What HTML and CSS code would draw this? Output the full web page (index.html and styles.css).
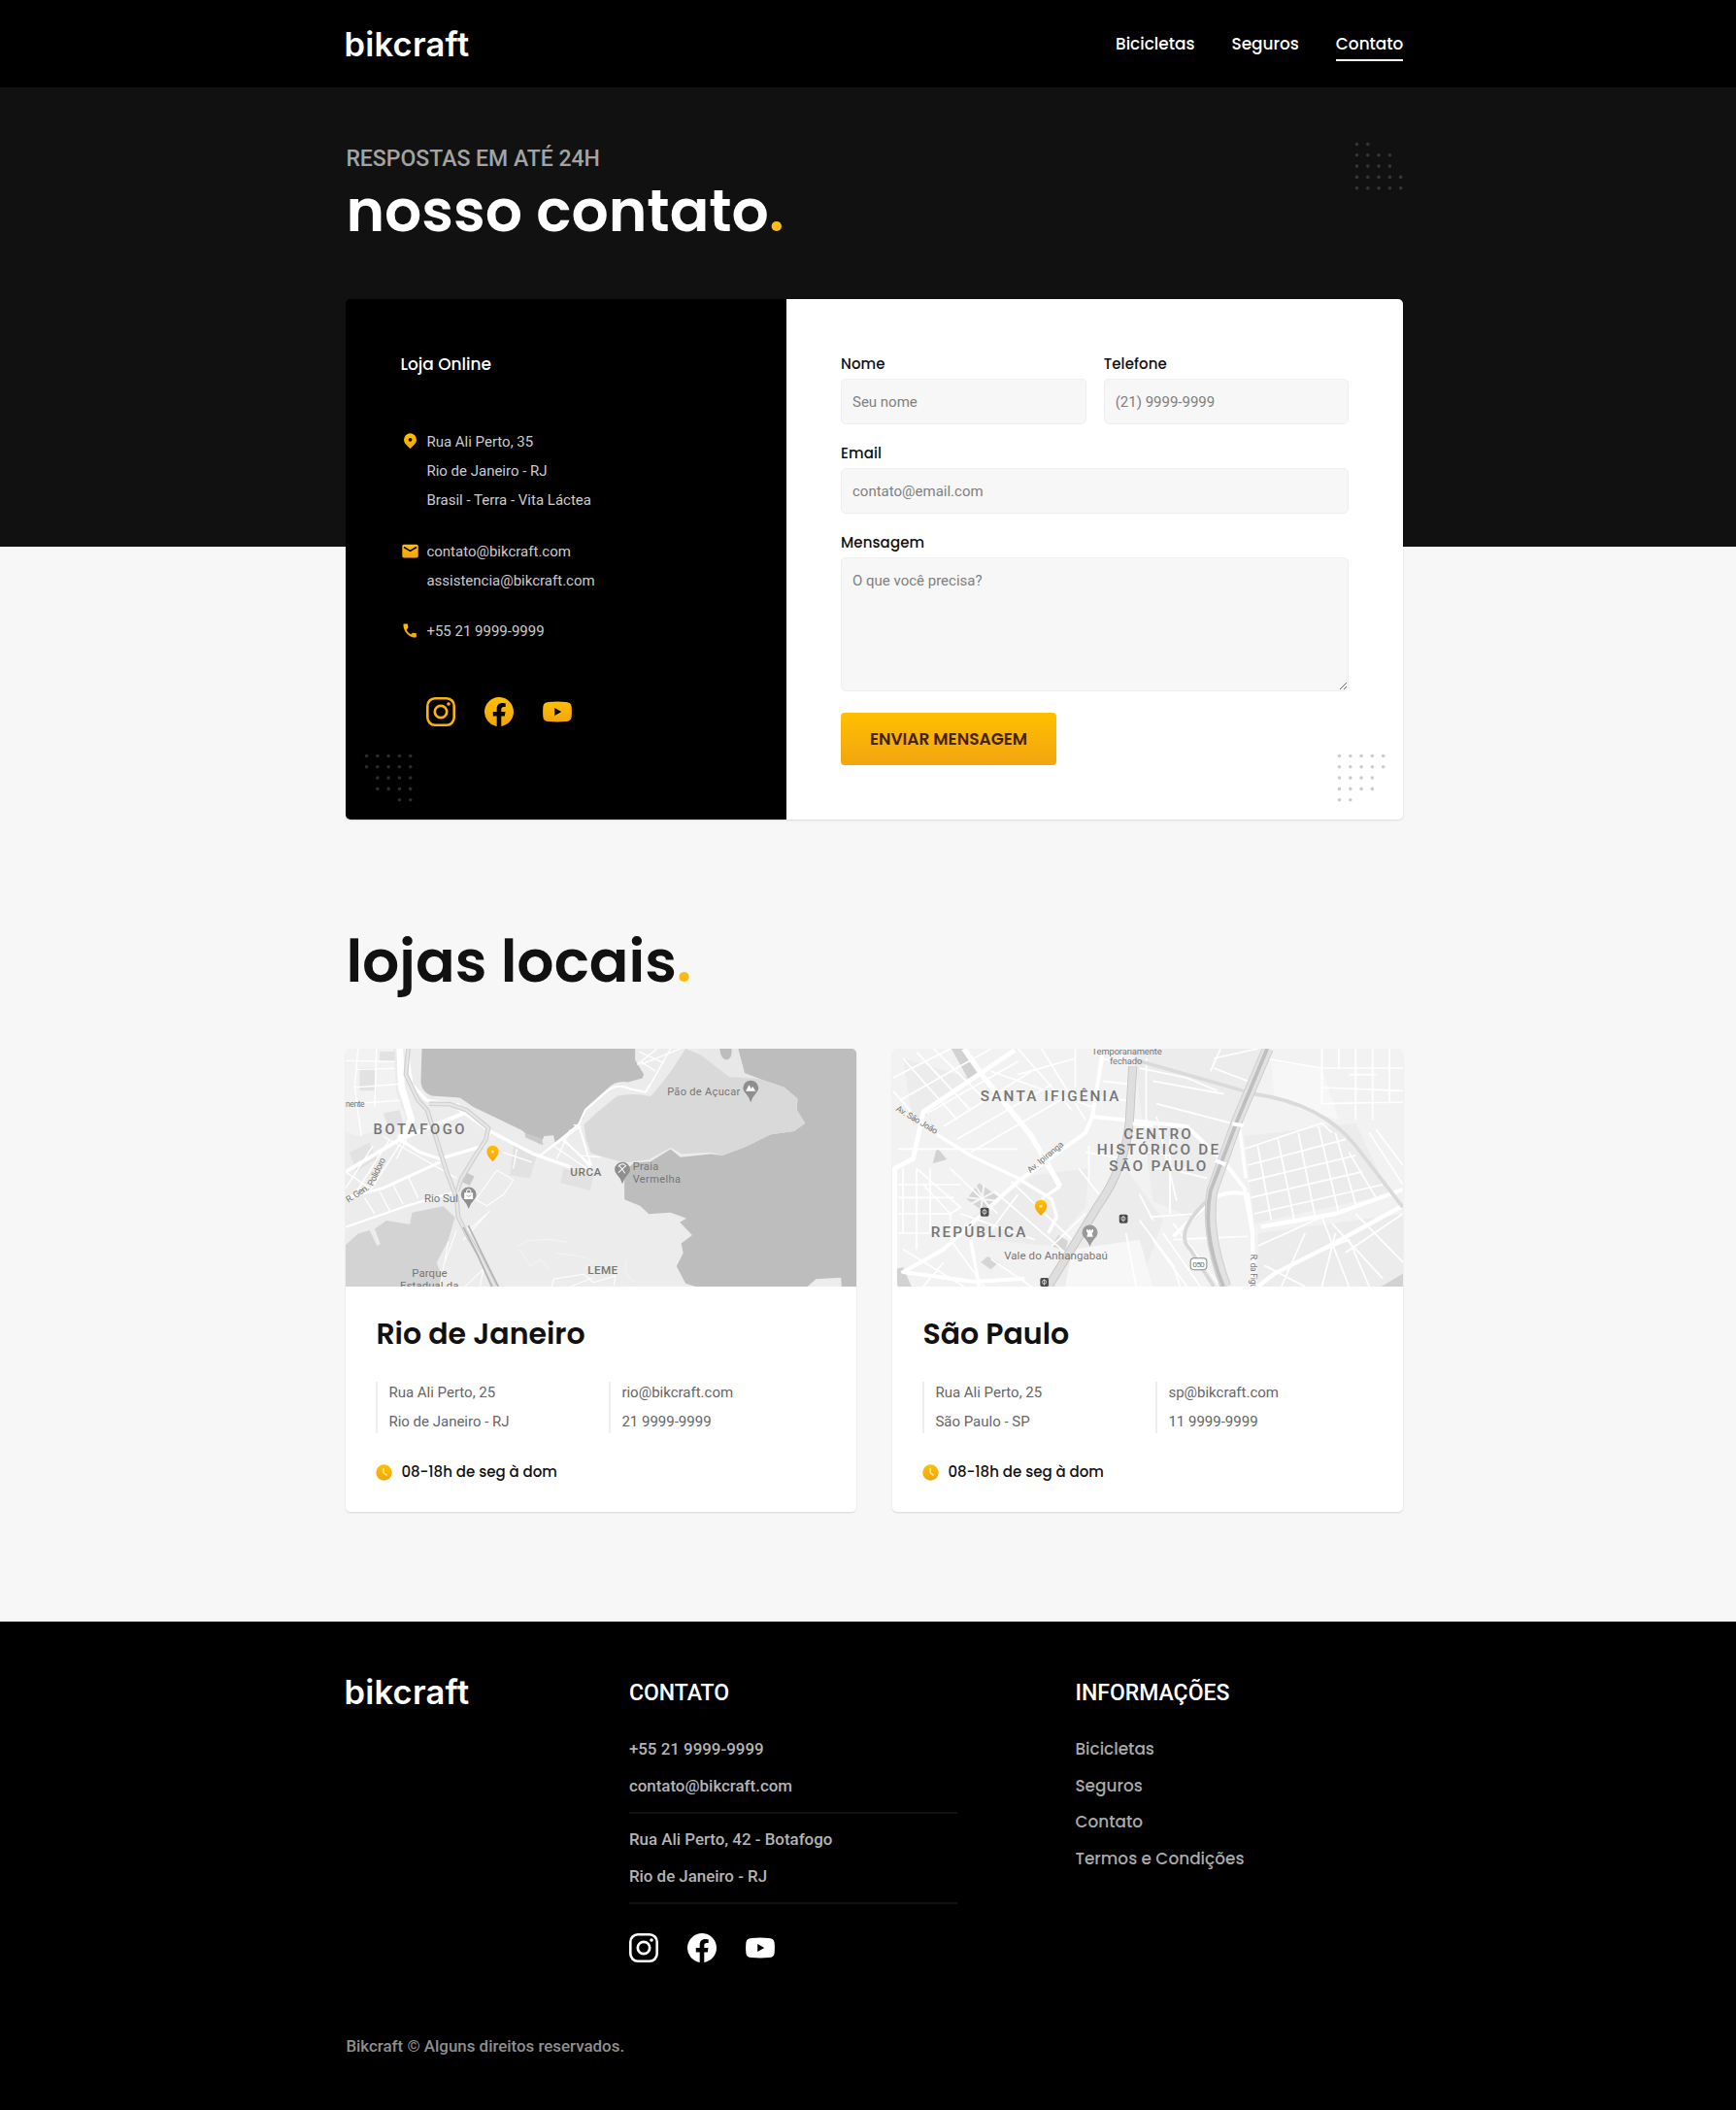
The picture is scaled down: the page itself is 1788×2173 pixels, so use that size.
FILE: index.html
```html
<!DOCTYPE html>
<html lang="pt-BR">
<head>
<meta charset="utf-8">
<title>Bikcraft - Contato</title>
<link rel="stylesheet" href="styles.css">
</head>
<body>
<svg class="defs" width="0" height="0">
  <defs>
    <linearGradient id="gold" x1="0" y1="0" x2="0" y2="1"><stop offset="0" stop-color="#ffbf00"/><stop offset="1" stop-color="#f2a50f"/></linearGradient>
    <symbol id="instagram" viewBox="0 0 30 30"><rect x="1.3" y="1.3" width="27.4" height="27.4" rx="7.6" fill="none" stroke-width="2.6" class="line"/><circle cx="15" cy="15" r="6.2" fill="none" stroke-width="2.7" class="line"/><circle cx="23" cy="7" r="1.8"/></symbol>
    <symbol id="facebook" viewBox="0 0 30 30"><path d="M30 15.1A15 15 0 1 0 12.7 29.9V19.4H8.8V15.1h3.9v-3.3c0-3.8 2.2-5.9 5.7-5.9 1.6 0 3.3.3 3.3.3v3.7h-1.9c-1.9 0-2.5 1.2-2.5 2.4v2.8h4.2l-.7 4.3h-3.5v10.5A15 15 0 0 0 30 15.1Z"/></symbol>
    <symbol id="youtube" viewBox="0 0 30 30"><path fill-rule="evenodd" d="M6 4.9Q15 4.1 24 4.9Q29.2 5.2 29.6 9.6Q30.2 15 29.6 20.4Q29.2 24.8 24 25.1Q15 25.9 6 25.1Q.8 24.8.4 20.4Q-.2 15 .4 9.6Q.8 5.2 6 4.9ZM12.2 11v8l7-4Z"/></symbol>
    <symbol id="clock" viewBox="0 0 17 17"><circle cx="8.5" cy="8.5" r="8.2" fill="url(#gold)"/><path d="M8.2 4v5l3.4 2.4" fill="none" stroke="#ffe9ae" stroke-width="1.4"/></symbol>
  </defs>
</svg>

<header class="header">
  <div class="container header-row">
    <a class="logo">bikcraft</a>
    <nav class="nav">
      <a>Bicicletas</a>
      <a>Seguros</a>
      <a class="active">Contato</a>
    </nav>
  </div>
</header>

<main class="contact">
  <div class="container">
    <div class="hero">
      <div>
        <p class="eyebrow">RESPOSTAS EM ATÉ 24H</p>
        <h1 class="heading light">nosso contato<span class="dot">.</span></h1>
      </div>
      <svg class="dots" width="50" height="50" viewBox="0 0 50 50" fill="#363636"><g id="tri">
        <circle cx="2.5" cy="2.5" r="1.8"/><circle cx="13.8" cy="2.5" r="1.8"/>
        <circle cx="2.5" cy="13.8" r="1.8"/><circle cx="13.8" cy="13.8" r="1.8"/><circle cx="25.1" cy="13.8" r="1.8"/><circle cx="36.4" cy="13.8" r="1.8"/>
        <circle cx="2.5" cy="25.1" r="1.8"/><circle cx="13.8" cy="25.1" r="1.8"/><circle cx="25.1" cy="25.1" r="1.8"/><circle cx="36.4" cy="25.1" r="1.8"/>
        <circle cx="2.5" cy="36.4" r="1.8"/><circle cx="13.8" cy="36.4" r="1.8"/><circle cx="25.1" cy="36.4" r="1.8"/><circle cx="36.4" cy="36.4" r="1.8"/><circle cx="47.7" cy="36.4" r="1.8"/>
        <circle cx="2.5" cy="47.7" r="1.8"/><circle cx="13.8" cy="47.7" r="1.8"/><circle cx="25.1" cy="47.7" r="1.8"/><circle cx="36.4" cy="47.7" r="1.8"/><circle cx="47.7" cy="47.7" r="1.8"/></g>
      </svg>
    </div>

    <div class="panel">
      <section class="online">
        <h2>Loja Online</h2>
        <div class="info">
          <svg width="17" height="17" viewBox="0 0 17 17"><path fill="url(#gold)" fill-rule="evenodd" d="M8.5.3a6.5 6.5 0 0 1 6.5 6.5c0 4-3.6 6.3-6.5 9.4C5.6 13.1 2 10.8 2 6.8A6.5 6.5 0 0 1 8.5.3Zm0 4.6a1.9 1.9 0 1 0 0 3.8 1.9 1.9 0 0 0 0-3.8Z"/></svg>
          <p>Rua Ali Perto, 35<br>Rio de Janeiro - RJ<br>Brasil - Terra - Vita Láctea</p>
        </div>
        <div class="info">
          <svg width="17" height="17" viewBox="0 0 17 17"><rect x=".3" y="1.8" width="16.4" height="13.6" rx="1.6" fill="url(#gold)"/><path d="M2 4.5 8.5 8.3 15 4.5" fill="none" stroke="#000" stroke-width="1.5"/></svg>
          <p>contato@bikcraft.com<br>assistencia@bikcraft.com</p>
        </div>
        <div class="info">
          <svg width="17" height="17" viewBox="0 0 24 24"><path fill="url(#gold)" d="M6.6 10.8c1.4 2.8 3.8 5.1 6.6 6.6l2.2-2.2c.3-.3.7-.4 1-.2 1.1.4 2.3.6 3.6.6.6 0 1 .4 1 1V21c0 .6-.4 1-1 1C10.6 22 2 13.4 2 3c0-.6.5-1 1-1h4.5c.6 0 1 .4 1 1 0 1.3.2 2.5.6 3.6.1.4 0 .7-.2 1z"/></svg>
          <p>+55 21 9999-9999</p>
        </div>
        <div class="social gold">
          <svg><use href="#instagram"/></svg><svg><use href="#facebook"/></svg><svg><use href="#youtube"/></svg>
        </div>
        <svg class="corner left" width="50" height="50" viewBox="0 0 50 50" fill="#2c2c2c"><use href="#tri" transform="rotate(180 25.1 25.1)"/></svg>
      </section>

      <form class="form">
        <label><span>Nome</span><input type="text" placeholder="Seu nome"></label>
        <label><span>Telefone</span><input type="text" placeholder="(21) 9999-9999"></label>
        <label class="wide"><span>Email</span><input type="email" placeholder="contato@email.com"></label>
        <label class="wide"><span>Mensagem</span><textarea placeholder="O que você precisa?"></textarea></label>
        <button type="button">ENVIAR MENSAGEM</button>
        <svg class="corner right" width="50" height="50" viewBox="0 0 50 50" fill="#ccc"><use href="#tri" transform="matrix(1 0 0 -1 0 50.2)"/></svg>
      </form>
    </div>
  </div>
</main>

<section class="stores container">
  <h2 class="heading">lojas locais<span class="dot">.</span></h2>
  <div class="store-grid">
    <article class="store">
      <svg class="map" viewBox="18 421 1528 732" preserveAspectRatio="none">
        <rect x="18" y="421" width="1528" height="732" fill="#ececec"/>
        <path fill="#f2f2f2" d="M18 421H160L170 560 200 640 60 690 18 680Z"/>
        <path fill="#e2e2e2" d="M60 480h45v70H60ZM120 430h45v30h-45ZM130 620l50-10 10 40-45 10ZM30 740l60-30 20 50-60 40ZM670 790l90 20-10 48-90-25ZM520 720l70 30-20 70-60-10Z"/>
        <path fill="#bdbdbd" d="M246 421 243 525Q246 555 275 566L360 572 400 600 545 672 560 685 600 715 612 690 640 688 645 712 728 637 735 605 800 545Q825 518 862 524L905 512 910 500 884 455V421Z"/>
        <path fill="#bdbdbd" d="M1192 421 1212 498 1260 515 1330 540 1370 575 1368 610 1393 650 1360 675 1290 685 1210 725 1145 750 1110 745 1020 755 990 730 930 768 880 772 852 800 852 885 900 905 925 930 990 925 1038 943 1018 955 1055 995 1022 1020 1028 1050 1008 1090 1035 1143 1065 1153H1400L1425 1130 1500 1125 1502 1153H1546V421Z"/>
        <path fill="#d9d9d9" d="M1035 421 995 485Q955 540 930 568 880 555 830 567L765 622 731 655 737 700 752 742 800 757 852 772 925 762 990 725 1025 745 1110 740 1145 750 1210 725 1290 685 1360 675 1393 650 1368 610 1370 575 1330 540 1260 515Z"/>
        <path fill="#e8e8e8" d="M1072 421 1080 440 1165 508 1212 510 1260 515 1212 498 1192 421Z"/>
        <path fill="#bdbdbd" d="M1137 421Q1140 455 1160 455 1175 450 1173 421Z"/>
        <path fill="#d3d3d3" d="M18 1025 55 990 90 980 112 1028 122 1022 105 975 140 950 210 962 217 925 310 906 345 940 325 1010 290 1080 305 1120 300 1153H18Z"/>
        <path fill="#c9c9c9" d="M375 800l28 14-14 28-28-14ZM555 680l50 18 4 20-54-24Z"/>
        <g fill="none" stroke="#fff" stroke-width="4">
          <path d="M55 421 45 540 65 690M110 421 105 600M18 458 165 460M50 485 165 482M45 540 175 530M40 590 180 580M18 850 100 720M45 870 150 700M90 860 190 700M75 880 105 930M120 860 150 920M160 840 190 900M205 815 235 880M18 800 90 850M130 690 350 820M200 700 170 760M600 750 720 660 700 655M640 720 740 790M665 700 755 780M690 670 650 760M530 730 520 790M575 770 490 740M780 755 725 750M1020 421 900 470M990 421 925 540M950 421 890 470M895 430 970 465M900 460 945 490"/>
          <path d="M470 795 520 825 490 870 440 905 408 885 470 795M450 920 385 980 360 950M370 1010 440 930M325 1015 300 1153M350 980 310 1090M375 1153 430 1100 420 1153M635 1153 640 1130 730 1115 760 1140 825 1120 820 1150M690 1153 760 1125" stroke-width="3"/>
          <path d="M530 1030 560 1012 630 1008 680 1016M540 1040 570 1090 600 1070 625 1100M650 1050 720 1060 760 1075 730 1100M860 1070Q840 1110 885 1140" stroke-width="2" stroke="#f8f8f8"/>
        </g>
        <g fill="none" stroke="#fff" stroke-linejoin="round">
          <path d="M180 421 185 540 215 640 180 700" stroke-width="20"/>
          <path d="M200 421 215 530 260 580 340 595 450 675 580 745 690 785" stroke-width="10"/>
          <path d="M18 800 180 700 370 620 350 590" stroke-width="12"/><path d="M180 700 240 740 300 760 430 720 450 675" stroke-width="10"/>
          <path d="M18 880 130 850 300 770" stroke-width="9"/><path d="M18 970 200 905 350 860" stroke-width="7"/>
          <path d="M600 750 715 655 735 610 800 552Q830 525 870 545L915 555 930 530M715 655 752 780M670 700 720 750 750 785" stroke-width="6"/>
        </g>
        <path d="M205 421 198 500 235 580 262 610 290 700 320 800 350 880 355 940 380 990 420 1060 465 1153M268 590 330 592 380 610 445 665 438 700 400 760 365 820 352 860" fill="none" stroke="#cfcfcf" stroke-width="14"/>
        <path d="M205 421 198 500 235 580 262 610 290 700 320 800 350 880 355 940 380 990 420 1060 465 1153M268 590 330 592 380 610 445 665 438 700 400 760 365 820 352 860" fill="none" stroke="#e6e6e6" stroke-width="7"/>
        <path d="M370 970 415 1060 455 1153M385 965 430 1060 475 1153" fill="none" stroke="#b4b4b4" stroke-width="5"/>
        <g fill="#8f8f8f">
          <path id="pin" d="M1230 586Q1227 572 1214 558A23 23 0 1 1 1246 558Q1233 572 1230 586Z"/>
          <use href="#pin" x="-384" y="251"/><use href="#pin" x="-844" y="328"/>
        </g>
        <path fill="#fff" d="M1215 552 1225 532 1232 545 1235 537 1245 552ZM373 864h26v20h-26Z"/>
        <path fill="none" stroke="#fff" stroke-width="3" d="M380 864v-6q6-7 12 0v6M834 802 858 780M838 782 854 804M834 784a12 12 0 0 1 20-4"/><path d="M379 872q7 8 14 0" fill="none" stroke="#8f8f8f" stroke-width="2"/>
        <path fill="url(#gold)" d="M458 768Q440 750 440 737A18 18 0 0 1 476 737Q476 750 458 768Z"/><circle cx="458" cy="738" r="4.5" fill="#ffe49a"/>
        <g class="map-text">
          <text x="18" y="599" font-size="25" textLength="57">nente</text>
          <text x="101" y="683" font-size="43" font-weight="500" textLength="273">BOTAFOGO</text>
          <text x="980" y="563" font-size="32" textLength="218">Pão de Açucar</text>
          <text x="690" y="812" font-size="34" font-weight="500" textLength="93">URCA</text>
          <text x="877" y="794" font-size="32" textLength="77">Praia</text><text x="877" y="833" font-size="32" textLength="143">Vermelha</text>
          <text x="253" y="892" font-size="33" textLength="101">Rio Sul</text>
          <text x="742" y="1115" font-size="34" font-weight="500" textLength="90">LEME</text>
          <text x="216" y="1123" font-size="33" textLength="106">Parque</text><text x="181" y="1162" font-size="33" textLength="175">Estadual da</text>
          <g font-size="27"><text transform="translate(26 895) rotate(-33)" textLength="76">R. Gen.</text><text transform="translate(99 845) rotate(-65)" textLength="92">Polidoro</text></g>
        </g>
      </svg>
      <div class="store-body">
        <h3>Rio de Janeiro</h3>
        <div class="store-info">
          <p>Rua Ali Perto, 25<br>Rio de Janeiro - RJ</p>
          <p>rio@bikcraft.com<br>21 9999-9999</p>
        </div>
        <p class="hours"><svg width="17" height="17"><use href="#clock"/></svg><span>08-18h de seg à dom</span></p>
      </div>
    </article>
    <article class="store">
      <svg class="map" viewBox="28 30 1512 735" preserveAspectRatio="none">
        <rect x="28" y="30" width="1512" height="735" fill="#f2f2f2"/>
        <path fill="#ececec" d="M740 30H1130L1050 250 930 560 800 500ZM1070 300 1400 260 1500 480 1100 570ZM450 420 610 400 600 520 500 640 300 620 250 560ZM500 765 720 400 830 560 760 765ZM1110 600 1540 540V765H1110ZM60 60 260 120 90 270Z"/>
        <path fill="#f7f7f7" d="M1150 70 1300 90 1350 250 1270 230 1160 180ZM560 650 760 620 800 765H540Z"/>
        <path fill="#d2d2d2" d="M203 30H243L283 100 255 128ZM160 335 190 372 148 385ZM1475 765 1540 725V765ZM34 712 60 706 85 765H45Z"/>
        <path fill="#d5d5d5" d="M248 495 285 445 345 490 300 535ZM500 640 520 605 548 625 540 655ZM290 690 310 672 343 690 320 712Z"/>
        <path d="M250 490 340 500M275 455 320 530M300 445 290 530M260 510 335 470" stroke="#f6f6f6" stroke-width="6"/>
        <g fill="none" stroke="#fff" stroke-width="5">
          <path d="M60 60 220 250M100 40 260 220M150 30 300 185M30 160 130 280M30 120 200 30M50 190 320 30M130 230 400 70M180 270 440 100M220 310 500 140M260 350 540 180M320 100 620 210M400 30 560 220M470 30 600 250M570 30V150M400 110 570 60M45 340 400 340M100 400 230 520 200 540 120 450M45 450H230M45 490H210M60 400V600M100 400V650M140 400V600M45 540H200M45 600H140M200 400 340 540M230 540 450 620M200 540V620L300 765M380 440 560 620M330 470 540 660M400 480 300 620M500 640 600 540M60 650 240 765M320 680 440 765M120 765 180 690"/>
          <path d="M640 60 700 70 720 30M650 130 730 140M640 180 720 190M600 350 720 370 690 430M580 400 640 480M610 330V440M780 60 780 280M760 90 900 120 990 160M800 130 1010 170M810 200 1030 260M810 240 870 500M850 300V540M780 350 850 360M880 410 960 430M800 400 900 400M760 480 800 560M720 600 750 765M760 560 860 700 880 765M800 620 900 765M830 600 940 765M860 570 1000 765M790 550 930 540M860 620 1080 610M980 60 1110 30M980 90 1080 130M1000 30 970 100M1130 60 1300 90M1300 30V200M1300 90H1540M1300 150 1540 160M1300 200 1540 195M1350 30V90M1400 30V250M1450 30V250M1500 30V200M1380 110H1460"/>
          <path d="M1070 340 1300 260 1330 290M1080 390 1370 310M1080 440 1400 360M1090 490 1420 410M1100 540 1480 450M1110 330 1150 560M1170 310 1220 570M1230 290 1280 550M1290 270 1350 540M1340 290 1400 510M1380 350 1460 490M1440 290 1540 450M1460 280 1540 390M1110 640 1300 550 1380 765M1180 765 1250 600M1130 700 1250 765M1300 765 1340 600M1330 570 1480 740M1400 540 1540 690M1370 660 1540 540M1240 680 1380 620 1440 765"/>
        </g>
        <g fill="none" stroke="#fff" stroke-linejoin="round">
          <path d="M240 30 300 120 440 300 525 455" stroke-width="16"/><path d="M390 35 120 225 90 370 35 400V765" stroke-width="14"/>
          <path d="M160 295 260 360 400 430 500 495 515 550 490 600" stroke-width="10"/><path d="M620 240 600 290 400 440 180 650 60 720 270 750 420 740" stroke-width="12"/>
          <path d="M650 50 620 240 900 270 1010 380 1070 460 1095 600 1095 765" stroke-width="12"/><path d="M1095 600 1080 480Q1000 460 950 520L860 610" stroke-width="12"/>
          <path d="M1120 580 1340 540 1540 465M1540 515 1320 640 1160 725 1110 765" stroke-width="13"/><path d="M1055 265 1075 430M260 620 285 765M525 455 470 495" stroke-width="10"/>
        </g>
        <g fill="none" stroke-linejoin="round">
          <path d="M750 65Q900 110 1100 170 1300 200 1400 330L1540 520" stroke="#dadada" stroke-width="11"/><path d="M960 500Q860 600 910 650L980 765" stroke="#d8d8d8" stroke-width="11"/>
          <path d="M740 85 730 260Q715 400 640 510L490 765" stroke="#c4c4c4" stroke-width="26"/><path d="M740 85 730 260Q715 400 640 510L490 765" stroke="#dedede" stroke-width="21"/>
          <path d="M1140 30 1050 250 975 470Q955 600 1015 765" stroke="#cfcfcf" stroke-width="34"/><path d="M1140 30 1050 250 975 470Q955 600 1015 765" stroke="#e2e2e2" stroke-width="28"/><path d="M1138 30 1050 250 970 470Q945 600 1008 765" stroke="#bfbfbf" stroke-width="11"/>
          <path d="M985 375 1015 388M1035 262 1068 268M740 262 800 268" stroke="#fff" stroke-width="12"/>
        </g>
        <g fill="#4b4b4b"><rect x="289" y="521" width="25" height="27" rx="5"/><rect x="700" y="542" width="25" height="27" rx="5"/><rect x="466" y="738" width="25" height="27" rx="5"/></g>
        <g fill="none" stroke="#ddd" stroke-width="2.5"><path d="M301 525v19M712 546v19M478 742v19"/><circle cx="301" cy="534" r="6"/><circle cx="712" cy="555" r="6"/><circle cx="478" cy="751" r="6"/></g>
        <path fill="#999" d="M613 642Q610 630 597 614A23 23 0 1 1 629 614Q616 630 613 642Z"/><path fill="#fff" d="M603 588h4v4h4v-4h4v4h4v-4h4v8l-4 3 3 12h-18l3-12-4-3Z"/>
        <path fill="url(#gold)" d="M468 546Q450 528 450 515A18 18 0 0 1 486 515Q486 528 468 546Z"/><circle cx="468" cy="517" r="4.5" fill="#ffe49a"/>
        <rect x="911" y="677" width="48" height="36" rx="10" fill="#fff" stroke="#888" stroke-width="3"/>
        <g class="map-text">
          <text x="619" y="47" font-size="27" textLength="207">Temporariamente</text><text x="672" y="78" font-size="27" textLength="96">fechado</text>
          <g font-weight="500" font-size="44"><text x="289" y="191" textLength="410">SANTA IFIGÊNIA</text><text x="713" y="308" textLength="200">CENTRO</text><text x="634" y="358" textLength="360">HISTÓRICO DE</text><text x="670" y="408" textLength="287">SÃO PAULO</text><text x="142" y="611" textLength="281">REPÚBLICA</text></g>
          <text x="359" y="681" font-size="33" textLength="307">Vale do Anhangabaú</text>
          <text x="917" y="704" font-size="24" textLength="36">050</text>
          <g font-size="26"><text transform="translate(37 220) rotate(32)" textLength="140">Av. São João</text><text transform="translate(437 415) rotate(-41)" textLength="132">Av. Ipiranga</text><text transform="translate(1088 665) rotate(90)" textLength="106">R. da Figu</text></g>
        </g>
      </svg>
      <div class="store-body">
        <h3>São Paulo</h3>
        <div class="store-info">
          <p>Rua Ali Perto, 25<br>São Paulo - SP</p>
          <p>sp@bikcraft.com<br>11 9999-9999</p>
        </div>
        <p class="hours"><svg width="17" height="17"><use href="#clock"/></svg><span>08-18h de seg à dom</span></p>
      </div>
    </article>
  </div>
</section>

<footer class="footer">
  <div class="container">
    <div class="footer-grid">
      <a class="logo">bikcraft</a>
      <div class="footer-contact">
        <h3>CONTATO</h3>
        <p>+55 21 9999-9999<br>contato@bikcraft.com</p>
        <p>Rua Ali Perto, 42 - Botafogo<br>Rio de Janeiro - RJ</p>
        <div class="social"><svg><use href="#instagram"/></svg><svg><use href="#facebook"/></svg><svg><use href="#youtube"/></svg></div>
      </div>
      <div class="footer-links">
        <h3>INFORMAÇÕES</h3>
        <a>Bicicletas</a><a>Seguros</a><a>Contato</a><a>Termos e Condições</a>
      </div>
    </div>
    <p class="copyright">Bikcraft © Alguns direitos reservados.</p>
  </div>
</footer>
</body>
</html>
```
FILE: styles.css
```css
* { box-sizing: border-box; }
body { margin: 0; background: #f7f7f7; color: #111; font-family: Roboto, "Liberation Sans", sans-serif; }
h1, h2, h3, p { margin: 0; }
svg { display: block; }
.defs { position: absolute; }
.container { width: 1089px; margin-left: 356.4px; }
.nav, .heading, .online h2, .form label > span, .form button, .store h3, .hours, .footer-links a {
  font-family: Poppins, Inter, sans-serif;
}
.logo { font-family: Inter, Roboto, sans-serif; font-size: 34.5px; line-height: 40px; font-weight: 600; letter-spacing: .25px; color: #fff; }

.header { background: #000; height: 90px; }
.header-row { display: flex; justify-content: space-between; align-items: center; height: 90px; }
.header .logo { margin: 2px 0 0 -2px; }
.nav { display: flex; gap: 38px; font-size: 16.9px; font-weight: 500; line-height: 28px; color: #fff; }
.nav a { padding: 4px 0 2px; border-bottom: 2px solid transparent; }
.nav .active { border-color: #fff; }

.contact { background: linear-gradient(#111 473px, #f7f7f7 473px); }
.hero { display: flex; justify-content: space-between; height: 218px; padding-top: 56px; }
.eyebrow { font-size: 23px; line-height: 36px; color: #a3a3a3; font-weight: 500; }
.heading { font-size: 60px; line-height: 72px; font-weight: 600; }
.light { color: #fff; margin-top: -1px; }
.dot { color: #ffbb11; }

.panel { display: grid; grid-template-columns: 453.6px 1fr; height: 536px; border-radius: 5px; overflow: hidden; box-shadow: 0 1px 2px rgba(0,0,0,.12); }
.online { background: #000; color: #ccc; padding: 55px 56px; position: relative; }
.online h2 { font-size: 17px; font-weight: 500; color: #fff; line-height: 24px; margin-bottom: 53px; }
.info { display: flex; gap: 8px; margin: 0 0 22.5px 2px; font-size: 15px; line-height: 30px; }
.info svg { margin-top: 6px; }
.social { --ink: #fff; display: flex; gap: 30px; fill: #fff; }
.social svg { width: 30px; height: 30px; }
.line { stroke: var(--ink); }
.gold { --ink: #fab30a; margin: 53px 0 0 27px; fill: url(#gold); }
.corner { position: absolute; bottom: 18px; }
.left { left: 19px; }
.right { right: 18px; }

.form { position: relative; background: #fff; padding: 57px 56px 0; display: grid; grid-template-columns: 1fr 1fr; gap: 20px 18px; align-content: start; }
.form label { display: grid; }
.form label > span { font-size: 15px; line-height: 20px; font-weight: 500; letter-spacing: .1px; margin-bottom: 5px; }
.wide { grid-column: 1 / -1; }
input, textarea { width: 100%; border: 1px solid #eee; border-radius: 5px; background: #f7f7f7; height: 47px; padding: 8px 12px 8px 11px; font: 15px/30px Roboto, sans-serif; }
textarea { height: 138px; display: block; }
::placeholder { color: #808080; }
.form button { grid-column: 1 / -1; justify-self: start; width: 222px; height: 54px; margin-top: 2px; border: 0; border-radius: 4px; background: linear-gradient(#ffbf00, #f2a50f); font-size: 17px; font-weight: 600; color: #421; padding: 0 0 1px; }

.stores { padding: 110px 0 113px; }
.store-grid { display: grid; grid-template-columns: 1fr 1fr; gap: 37px; margin-top: 54px; }
.store { background: #fff; border-radius: 5px; overflow: hidden; box-shadow: 0 1px 2px rgba(0,0,0,.12); height: 477px; }
.map { width: 100%; height: 245px; }
.map-text { font-family: Roboto, sans-serif; fill: #757575; }
.store-body { padding: 27px 31px; }
.store h3 { font-size: 30px; font-weight: 600; line-height: 44px; }
.store-info { display: grid; grid-template-columns: 240px 1fr; margin-top: 26px; font-size: 15px; line-height: 30px; color: #666; }
.store-info p { border-left: 2px solid #eee; height: 53px; padding-left: 11px; margin-top: 1px; }
.store-info p::before { content: ""; display: block; margin-top: -4px; }
.hours { display: flex; gap: 9px; align-items: center; margin-top: 28px; font-size: 15px; font-weight: 500; line-height: 24px; }

.footer { background: #000; height: 503px; padding-top: 57px; color: #b4b4b4; }
.footer .logo { margin: -4px 0 0 -2px; }
.footer-grid { display: grid; grid-template-columns: 291.5px 338px 1fr; }
.footer h3 { font-family: Roboto, sans-serif; font-size: 23px; line-height: 34px; font-weight: 500; color: #fff; margin-bottom: 22px; }
.footer-contact p { font-size: 16.9px; font-weight: 500; line-height: 37.5px; border-bottom: 2px solid #111; padding-bottom: 8px; margin-bottom: 8px; }
.footer-contact .social { padding-top: 22px; }
.footer-links { margin-left: 121.5px; font-size: 16.9px; font-weight: 500; color: #aaa; }
.footer-links a { display: block; line-height: 37.5px; }
.copyright { font-size: 16.9px; font-weight: 500; line-height: 24px; color: #8f8f8f; margin-top: 74px; }
```
